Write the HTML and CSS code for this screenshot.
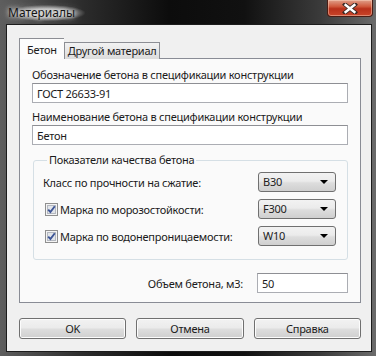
FILE: index.html
```html
<!DOCTYPE html>
<html lang="ru">

<head>
    <meta charset="UTF-8">
    <meta name="viewport" content="width=device-width, initial-scale=1.0">
    <title>Материалы</title>
    <link rel="stylesheet" href="styles.css">
</head>

<body>
    <div class="window">
        <div class="titlebar">
            <span class="title">Материалы</span>
            <button class="close" title="Закрыть">
                <svg width="16" height="11" viewBox="0 0 16 11">
                    <path d="M3 1.5 L13 9.5 M13 1.5 L3 9.5" stroke="#3a2a26" stroke-width="4.2" stroke-linecap="square" />
                    <path d="M3.6 2 L12.4 9 M12.4 2 L3.6 9" stroke="#ffffff" stroke-width="2.4" stroke-linecap="square" />
                </svg>
            </button>
        </div>

        <div class="client">
            <div class="tabs">
                <div class="tab active">Бетон</div>
                <div class="tab">Другой материал</div>
            </div>

            <div class="panel">
                <label class="caption" for="spec">Обозначение бетона в спецификации конструкции</label>
                <input class="textbox" type="text" id="spec" value="ГОСТ 26633-91" />

                <label class="caption second" for="name">Наименование бетона в спецификации конструкции</label>
                <input class="textbox" type="text" id="name" value="Бетон" />

                <fieldset class="group">
                    <legend>Показатели качества бетона</legend>

                    <div class="row">
                        <span class="row-text">Класс по прочности на сжатие:</span>
                        <div class="combo">B30<span class="arrow"></span></div>
                    </div>
                    <div class="row">
                        <span class="row-text">
                            <span class="check">
                                <svg width="13" height="13" viewBox="0 0 13 13">
                                    <rect x="0.5" y="0.5" width="12" height="12" fill="#f4f4f4" stroke="#8f8f8f" />
                                    <rect x="2.5" y="2.5" width="8" height="8" fill="#e2e5ea" stroke="#b4b8c0" />
                                    <path d="M3.2 6.6 L5.4 9 L9.8 3.2" fill="none" stroke="#3d5596" stroke-width="1.9" />
                                </svg>
                            </span>
                            Марка по морозостойкости:
                        </span>
                        <div class="combo">F300<span class="arrow"></span></div>
                    </div>
                    <div class="row">
                        <span class="row-text">
                            <span class="check">
                                <svg width="13" height="13" viewBox="0 0 13 13">
                                    <rect x="0.5" y="0.5" width="12" height="12" fill="#f4f4f4" stroke="#8f8f8f" />
                                    <rect x="2.5" y="2.5" width="8" height="8" fill="#e2e5ea" stroke="#b4b8c0" />
                                    <path d="M3.2 6.6 L5.4 9 L9.8 3.2" fill="none" stroke="#3d5596" stroke-width="1.9" />
                                </svg>
                            </span>
                            Марка по водонепроницаемости:
                        </span>
                        <div class="combo">W10<span class="arrow"></span></div>
                    </div>
                </fieldset>

                <div class="volume">
                    <label for="volume">Объем бетона, м3:</label>
                    <input class="textbox small" type="text" id="volume" value="50" />
                </div>
            </div>

            <div class="buttons">
                <button class="btn">OK</button>
                <button class="btn">Отмена</button>
                <button class="btn">Справка</button>
            </div>
        </div>
    </div>
</body>

</html>
```

FILE: styles.css
```css
body {
    margin: 0;
    padding: 0;
    background: #000;
    font-family: 'Segoe UI', 'Noto Sans', sans-serif;
    font-size: 11px;
    letter-spacing: -0.25px;
    color: #1b1b1b;
}

.window {
    width: 376px;
    height: 356px;
    display: flex;
    flex-direction: column;
    box-sizing: border-box;
    padding: 0 4px 4px 6px;
    background: linear-gradient(90deg, #5e5e5e 0%, #2c2c2c 22%, #0c0c0c 45%, #111 65%, #3a3a3a 85%, #6b6b6b 100%);
}

.titlebar {
    height: 24px;
    display: flex;
    align-items: flex-start;
    justify-content: space-between;
}

.title {
    margin: 5px 0 0 2px;
    font-size: 12px;
    line-height: 16px;
    letter-spacing: 0;
    color: #151515;
    background: radial-gradient(ellipse at center, rgba(235, 235, 235, .75) 35%, rgba(235, 235, 235, 0) 72%);
    padding: 0 10px 0 0;
    text-shadow: 0 0 4px #e8e8e8, 0 0 8px #d0d0d0;
}

.close {
    width: 46px;
    height: 17px;
    margin: 0 -1px 0 0;
    padding: 0;
    border: 1px solid #4a1d14;
    border-top: 0;
    border-radius: 0 0 4px 4px;
    background: linear-gradient(#e0a08a 0%, #d05a3e 40%, #b8301a 55%, #c8452a 100%);
    box-shadow: inset 0 0 0 1px rgba(255, 220, 200, .45);
    display: flex;
    align-items: center;
    justify-content: center;
}

.client {
    flex: 1;
    background: #f0f0f0;
    border: 1px solid #1c1c1c;
    padding: 13px 10px 12px 12px;
    display: flex;
    flex-direction: column;
}

.tabs {
    display: flex;
    align-items: flex-end;
    height: 21px;
    margin-bottom: -1px;
    position: relative;
    z-index: 1;
}

.tab {
    height: 16px;
    line-height: 16px;
    padding: 0 2px 0 3px;
    border: 1px solid #8c8e94;
    border-bottom: 0;
    background: linear-gradient(#f2f2f2, #dcdcdc);
    color: #1b1b1b;
}

.tab.active {
    height: 20px;
    line-height: 22px;
    padding: 0 7px;
    background: #fcfcfc;
    border-right: 0;
}

.panel {
    background: #fafafa;
    border: 1px solid #898c95;
    padding: 8px 12px 9px 12px;
    display: flex;
    flex-direction: column;
}

.caption {
    line-height: 16px;
}

.caption.second {
    margin-top: 6px;
}

.textbox {
    box-sizing: border-box;
    height: 20px;
    width: 100%;
    margin: 0;
    padding: 0 4px;
    border: 1px solid #abadb3;
    border-top-color: #8e8f94;
    background: #fff;
    font: inherit;
    letter-spacing: inherit;
    color: #1b1b1b;
}

.group {
    margin: 7px 0 0 1px;
    padding: 4px 11px 13px 9px;
    border: 1px solid #d5dfe5;
    border-radius: 3px;
    display: flex;
    flex-direction: column;
    gap: 7px;
}

.group legend {
    padding: 0 2px;
    margin-left: 4px;
    line-height: 16px;
}

.row {
    display: flex;
    align-items: center;
    justify-content: space-between;
    height: 20px;
}

.row-text {
    display: flex;
    align-items: center;
}

.check {
    display: flex;
    margin: 0 2px 0 2px;
}

.combo {
    box-sizing: border-box;
    width: 78px;
    height: 20px;
    line-height: 18px;
    padding: 0 4px;
    border: 1px solid #707070;
    border-radius: 3px;
    background: linear-gradient(#f2f2f2 0%, #ebebeb 45%, #dddddd 55%, #cfcfcf 100%);
    display: flex;
    justify-content: space-between;
    align-items: center;
    color: #222;
}

.arrow {
    width: 0;
    height: 0;
    margin-right: 3px;
    border-left: 4px solid transparent;
    border-right: 4px solid transparent;
    border-top: 4px solid #000;
}

.volume {
    display: flex;
    justify-content: flex-end;
    align-items: center;
    gap: 14px;
    margin-top: 13px;
}

.textbox.small {
    width: 91px;
}

.buttons {
    margin-top: 15px;
    display: grid;
    grid-template-columns: 1fr 1fr 1fr;
    gap: 10px;
}

.btn {
    height: 21px;
    margin: 0;
    padding: 0;
    border: 1px solid #707070;
    border-radius: 3px;
    background: linear-gradient(#f2f2f2 0%, #ebebeb 45%, #dddddd 55%, #cfcfcf 100%);
    box-shadow: inset 0 0 0 1px #fcfcfc;
    font: inherit;
    letter-spacing: inherit;
    color: #1b1b1b;
}
```
